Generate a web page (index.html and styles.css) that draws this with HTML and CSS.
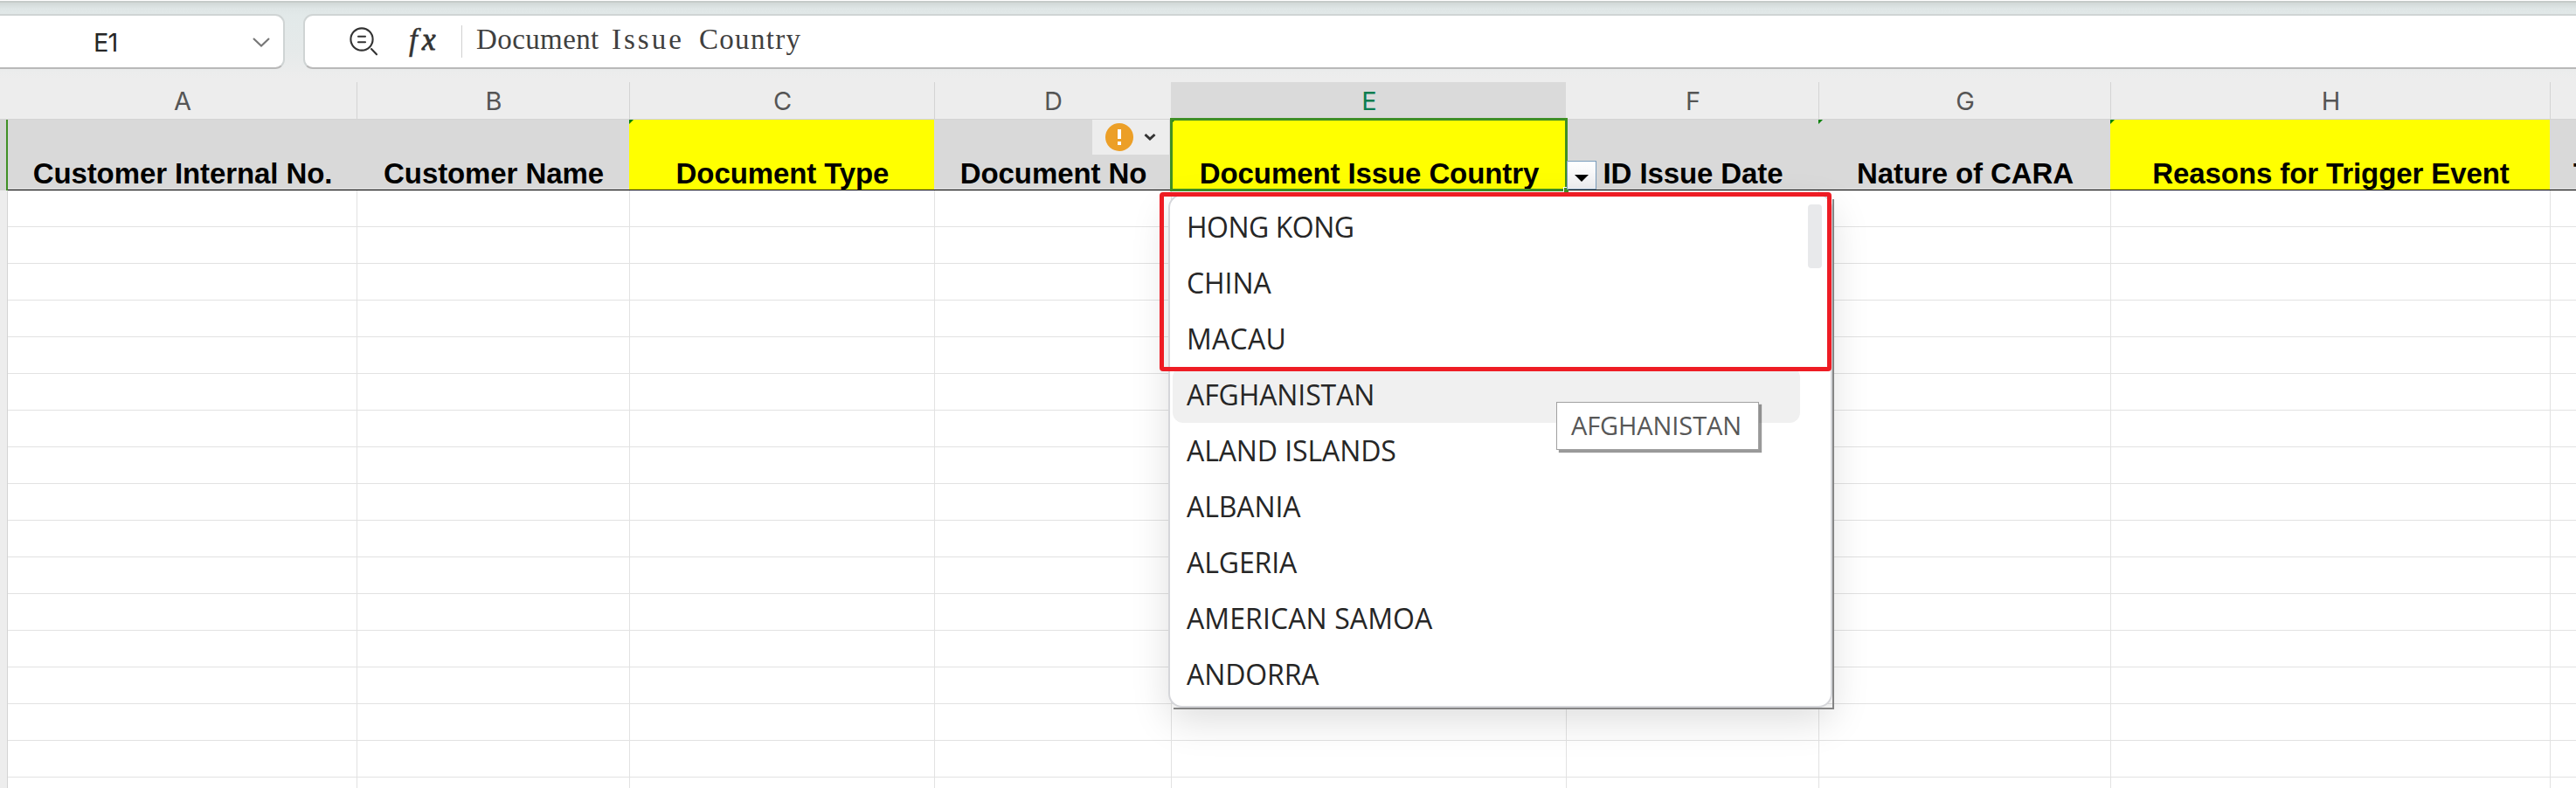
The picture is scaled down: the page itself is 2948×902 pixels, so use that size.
FILE: index.html
```
<!DOCTYPE html>
<html lang="en">
<head>
<meta charset="utf-8">
<title>Spreadsheet</title>
<link rel="stylesheet" href="styles.css">
</head>
<body>
<div class="app">
  <div class="topbar">
    <div class="name-box">
      <span class="name-text">E1</span>
      <svg class="name-chevron" width="22" height="14" viewBox="0 0 22 14" fill="none" stroke="#777" stroke-width="2.2"><path d="M2 2l9 8.5L20 2"/></svg>
    </div>
    <div class="formula-bar">
      <svg class="zoom-icon" width="34" height="34" viewBox="0 0 34 34" fill="none" stroke="#333" stroke-width="2.1" stroke-linecap="round">
        <circle cx="15" cy="15" r="12.6"/><path d="M11 11.7h8M11 18.3h8M26 26l6 6.3"/>
      </svg>
      <span class="fx"><span class="fx-f">f</span><span class="fx-x">x</span></span>
      <span class="divider"></span>
      <span class="formula-text"><span class="w1">Document</span> <span class="w2">Issue</span> <span class="w3">Country</span></span>
    </div>
  </div>

  <div class="col-heads cols">
    <div class="corner"></div><div>A</div><div>B</div><div>C</div><div class="no-line">D</div><div class="active">E</div><div>F</div><div>G</div><div>H</div><div></div>
  </div>

  <div class="title-row">
    <div class="row-head"></div>
    <div class="cell">Customer Internal No.</div>
    <div class="cell">Customer Name</div>
    <div class="cell yellow flag">Document Type</div>
    <div class="cell">Document No
      <div class="warn-tag">
        <svg width="32" height="32" viewBox="0 0 32 32"><circle cx="16" cy="16" r="16" fill="#ec9f27"/><path d="M14 7h4v11h-4zM14 21h4v4h-4z" fill="#fff"/></svg>
        <svg width="14" height="10" viewBox="0 0 14 10" fill="none" stroke="#333" stroke-width="3"><path d="M1.500 2L7 7l5.500-5"/></svg>
      </div>
    </div>
    <div class="cell yellow">Document Issue Country
      <div class="selection"><i class="mini-flag"></i><i class="handle"></i></div>
    </div>
    <div class="cell">ID Issue Date
      <div class="dv-button"><svg width="16" height="8" viewBox="0 0 16 8"><path d="M0 0h16L8 8z"/></svg></div>
    </div>
    <div class="cell flag">Nature of CARA</div>
    <div class="cell yellow flag">Reasons for Trigger Event</div>
    <div class="cell last">T</div>
  </div>

  <div class="sheet cols">
    <div class="head-col"></div><div></div><div></div><div></div><div></div><div></div><div></div><div></div><div></div><div></div>
  </div>

  <div class="dropdown">
    <div class="list">
      <div class="item hk">HONG KONG</div>
      <div class="item">CHINA</div>
      <div class="item macau">MACAU</div>
      <div class="item hover">AFGHANISTAN</div>
      <div class="item">ALAND ISLANDS</div>
      <div class="item">ALBANIA</div>
      <div class="item">ALGERIA</div>
      <div class="item samoa">AMERICAN SAMOA</div>
      <div class="item">ANDORRA</div>
    </div>
    <div class="scroll-thumb"></div>
  </div>
  <div class="tooltip">AFGHANISTAN</div>
  <div class="highlight"></div>
</div>
</body>
</html>
```
FILE: styles.css
```
* { box-sizing: border-box; }
body { margin: 0; }
.app {
  position: relative;
  width: 2948px;
  height: 902px;
  overflow: hidden;
  display: flex;
  flex-direction: column;
  background: #fff;
  font-family: "Liberation Sans", sans-serif;
}

/* Name box and formula bar */
.topbar {
  flex: none;
  display: flex;
  gap: 21px;
  height: 94px;
  padding-top: 16px;
  background: linear-gradient(#fff 0 1px, #c5cbc9 1px 3px, #d1d8d7 3px, #dfe6e6 10px, #e2e9e9 18px, #e6eaea 60px, #ededed 90px);
}
.name-box, .formula-bar {
  height: 63px;
  display: flex;
  align-items: center;
  background: #fff;
  border: 2px solid #cfd4d4;
  border-bottom-color: #b9b9b9;
}
.name-box {
  width: 326px;
  padding: 0 14px 0 107px;
  justify-content: space-between;
  border-left: 0;
  border-radius: 0 11px 11px 0;
}
.name-text {
  font: 29px/36px "Inter", sans-serif;
  color: #262626;
  letter-spacing: -1px;
  padding-top: 2px;
}
.name-chevron { margin-top: 2px; }
.formula-bar {
  flex: 1;
  padding-left: 50px;
  border-right: 0;
  border-radius: 11px 0 0 11px;
}
.zoom-icon { margin-top: -1px; }
.fx {
  display: flex;
  align-items: baseline;
  width: 60px;
  margin-left: 35px;
  margin-top: -4px;
  font-family: "Liberation Serif", serif;
  font-style: italic;
  line-height: 44px;
  color: #333;
}
.fx-f { font-size: 35px; width: 15px; -webkit-text-stroke: 0.5px #333; }
.fx-x { font-size: 35px; -webkit-text-stroke: 0.9px #333; }
.divider { width: 1px; height: 37px; background: #d0d0d0; }
.formula-text {
  margin: -5px 0 0 16px;
  font: 33px/44px "Liberation Serif", serif;
  color: #404040;
  white-space: nowrap;
  display: flex;
}
.w1 { width: 155px; letter-spacing: 0.400px; }
.w2 { width: 100px; letter-spacing: 3px; }
.w3 { letter-spacing: 1.300px; }

/* Column letters */
.cols {
  display: grid;
  grid-template-columns: 9px 400px 312px 349px 271px 452px 289px 334px 503px 29px;
}
.col-heads {
  flex: none;
  height: 43px;
  background: #ededed;
  border-bottom: 1px solid #d4d4d4;
  font: 29px/42px "Inter", sans-serif;
  color: #555;
  text-align: center;
}
.col-heads > div { border-right: 1px solid #d4d4d4; padding: 1px 0 0 1px; height: 42px; }
.col-heads > .corner, .col-heads > div:last-child { border-right: 0; }
.col-heads > .no-line { border-right-color: #dadada; }
.col-heads > .active { background: #dadada; border-right-color: #ededed; color: #0b7d4f; }

/* Title row */
.title-row {
  flex: none;
  display: grid;
  grid-template-columns: 8px 400px 312px 349px 271px 452px 289px 334px 503px 30px;
  height: 81px;
  border-bottom: 1px solid #000;
  background: #d9d9d9;
}
.row-head { background: #d4d4d4; border-right: 2px solid #3f8f24; margin-right: -1px; height: 81px; z-index: 1; }
.cell {
  position: relative;
  display: flex;
  align-items: flex-end;
  justify-content: center;
  height: 80px;
  padding-left: 2px;
  font-weight: bold;
  font-size: 33px;
  line-height: 36px;
  letter-spacing: -0.1px;
  color: #000;
  white-space: nowrap;
}
.yellow { background: #ff0; }
.flag::before {
  content: "";
  position: absolute;
  left: 0;
  top: 0;
  border-top: 5px solid #008000;
  border-right: 5px solid transparent;
}
.last { justify-content: flex-start; padding-left: 27px; overflow: hidden; }
.warn-tag {
  position: absolute;
  right: 2px;
  top: 0;
  width: 88px;
  height: 40px;
  padding: 0 15px 0 15px;
  display: flex;
  align-items: center;
  justify-content: space-between;
  background: #ededed;
}
.selection {
  position: absolute;
  left: -1px;
  top: -2px;
  width: 455px;
  height: 84px;
  border: 3px solid #3f8f24;
  z-index: 2;
}
.mini-flag {
  position: absolute;
  left: 0;
  top: 0;
  border-top: 2px solid #008000;
  border-right: 2px solid transparent;
}
.handle {
  position: absolute;
  right: -4px;
  bottom: -4px;
  width: 6px;
  height: 6px;
  background: #3f8f24;
  border-left: 1px solid #fff;
  border-top: 1px solid #fff;
}
.dv-button {
  position: absolute;
  left: 1px;
  top: 47px;
  width: 34px;
  height: 33px;
  display: flex;
  align-items: center;
  justify-content: center;
  padding-top: 6px;
  border: 1px solid #7a9cbc;
  background: linear-gradient(#fff, #ededf0);
  z-index: 3;
}
.dv-button svg { display: block; }

/* Empty grid */
.sheet { flex: 1; }
.sheet > div {
  border-right: 1px solid #e2e2e2;
  background: repeating-linear-gradient(#fff 0 41px, #e2e2e2 41px 42px);
}
.sheet > .head-col { background: #ededed; border-right-color: #d4d4d4; }
.sheet > div:last-child { border-right: 0; }

/* Validation list */
.dropdown {
  position: absolute;
  left: 1337px;
  top: 222px;
  width: 760px;
  height: 588px;
  padding: 4px 0 0 3px;
  border: 2px solid #d5d6da;
  border-radius: 16px;
  background: #fff;
  box-shadow: 0 16px 44px rgba(0, 0, 0, 0.13);
  z-index: 4;
}
.dropdown::after {
  content: "";
  position: absolute;
  left: 4px;
  top: 4px;
  right: -4px;
  bottom: -4px;
  border: solid #858585;
  border-width: 0 2px 2px 0;
}
.list { width: 718px; }
.item {
  height: 64px;
  padding: 1px 0 0 16px;
  font: 32px/62px "Open Sans", sans-serif;
  letter-spacing: -0.1px;
  color: #262626;
  border-radius: 12px;
}
.hk { letter-spacing: -0.5px; }
.macau { letter-spacing: 0.300px; }
.samoa { letter-spacing: 0.1px; }
.hover { background: #f0f0f0; }
.scroll-thumb {
  position: absolute;
  left: 730px;
  top: 10px;
  width: 16px;
  height: 73px;
  border-radius: 4px;
  background: #e8e9eb;
}
.tooltip {
  position: absolute;
  left: 1781px;
  top: 460px;
  width: 232px;
  height: 55px;
  padding-left: 16px;
  font: 29px/52px "Open Sans", sans-serif;
  letter-spacing: -0.1px;
  color: #575757;
  background: #fff;
  border: 1px solid #a0a0a0;
  box-shadow: 3px 3px 1px rgba(0, 0, 0, 0.4);
  z-index: 5;
}
.highlight {
  position: absolute;
  left: 1327px;
  top: 220px;
  width: 769px;
  height: 205px;
  border: 5px solid #ee1c24;
  border-radius: 4px;
  z-index: 6;
}
```
